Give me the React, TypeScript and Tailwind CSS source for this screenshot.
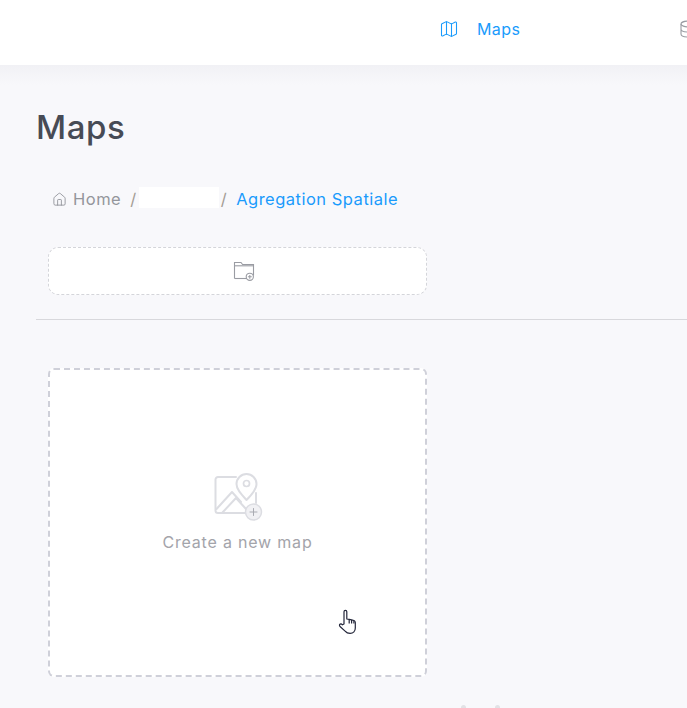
import React from "react";
import { Home, Map } from "lucide-react";

const font = "font-['Inter','Liberation_Sans',sans-serif]";

const FolderPlusIcon = () => (
  <svg width="22" height="22" viewBox="0 0 22 22" fill="none" stroke="#9a9ca3" strokeWidth="1.1">
    <path d="M1.5 18.5V2.5H8l1.6 2h10.9v11" />
    <path d="M1.5 5.8h19" />
    <path d="M1.5 18.5h12.5" />
    <circle cx="16.8" cy="16.8" r="3.6" />
    <path d="M16.8 14.9v3.8M14.9 16.8h3.8" />
  </svg>
);

const NewMapIcon = () => (
  <svg width="50" height="50" viewBox="0 0 50 50" fill="none" stroke="#dcdde2" strokeWidth="2" strokeLinejoin="round" strokeLinecap="round">
    <path d="M23 5H5a2.500 2.500 0 0 0-2.500 2.500v31A2.500 2.500 0 0 0 5 41h27" />
    <path d="M43 21v10" />
    <path d="M3.500 37 19 20l9 10" />
    <path d="M9 41l14-15 10 11" />
    <path d="M33.500 28c-6-6.500-10-11-10-16a10 10 0 0 1 20 0c0 5-4 10-10 16Z" fill="#fff" />
    <circle cx="33.500" cy="11.500" r="3" strokeWidth="1.700" />
    <circle cx="40.500" cy="40" r="8" fill="#f1f1f4" strokeWidth="1.500" />
    <path d="M40.500 36.500v7M37 40h7" stroke="#a9abb2" strokeWidth="1" />
  </svg>
);

const HandCursor = () => (
  <svg width="20" height="26" viewBox="0 0 20 26" fill="#fff" stroke="#23263a" strokeWidth="1.200" strokeLinejoin="round">
    <path d="M6 15V2.800a1.400 1.400 0 0 1 2.800 0V10l2.400.4 2.400.5 2.300.6c1 .3 1.400 1 1.400 2v5.500c0 3-2 5.400-5.200 5.400-2.400 0-3.800-.8-5-2.300L2 17.500c-.8-1-.6-2 .2-2.400.8-.4 1.500-.1 2.200.7Z" />
    <path d="M11.200 10.400v4.200M13.600 10.900v3.700M15.900 11.500v3.100" />
  </svg>
);

export default function App() {
  return (
    <div className={`relative h-[708px] overflow-hidden bg-[#f8f8fb] ${font}`}>
      <header className="flex h-[65px] items-center overflow-hidden bg-white pb-[7px] pl-[439px]">
        <Map size={20} strokeWidth={1.300} className="shrink-0 text-[#1a9bfc]" />
        <span className="ml-[18px] w-[202px] shrink-0 text-[16px] tracking-[0.4px] text-[#1a9bfc]">Maps</span>
        <svg width="20" height="20" viewBox="0 0 20 20" fill="none" stroke="#9a9ca3" strokeWidth="1.100" className="shrink-0">
          <ellipse cx="10" cy="5" rx="8" ry="3" />
          <path d="M2 5v10c0 1.700 3.600 3 8 3s8-1.300 8-3V5M2 10c0 1.700 3.600 3 8 3s8-1.300 8-3" />
        </svg>
      </header>
      <div className="h-5 bg-gradient-to-b from-[#f1f1f5] to-[#f8f8fb]" />

      <main className="-mt-5 pl-9">
        <h1 className="mt-[44px] h-9 text-[33px] leading-9 font-medium tracking-[0.6px] text-[#474b55]">Maps</h1>

        <nav className="mt-[33px] flex h-[42px] items-center pl-[16px] text-[16.5px] tracking-[0.5px]">
          <Home size={15} strokeWidth={1.400} className="text-[#8f9198]" />
          <span className="ml-[6px] text-[#94969c]">Home</span>
          <span className="ml-[9px] text-[#a39c94]">/</span>
          <span className="mx-[2px] mb-1 h-[21px] w-[80px] bg-white" />
          <span className="text-[#a39c94]">/</span>
          <span className="ml-[9px] text-[#1a9bfc]">Agregation Spatiale</span>
        </nav>

        <button className="mt-[27px] ml-3 flex h-12 w-[379px] items-center justify-center rounded-[10px] border border-dashed border-[#d4d5da] bg-white pl-3">
          <FolderPlusIcon />
        </button>

        <hr className="mt-6 border-t border-[#d8d8dc]" />

        <button className="mt-12 ml-3 flex h-[309px] w-[379px] flex-col items-center justify-center rounded-[6px] border-2 border-dashed border-[#cfd0d9] bg-white pb-[20px]">
          <NewMapIcon />
          <span className="mt-2 text-[16px] tracking-[0.8px] text-[#a3a4aa]">Create a new map</span>
        </button>
      </main>

      <div className="absolute top-[609px] left-[338px]">
        <HandCursor />
      </div>
      <div className="absolute top-[705px] left-[461px] h-[3px] w-[5px] rounded-t-sm bg-[#e2e2e6]" />
      <div className="absolute top-[705px] left-[495px] h-[3px] w-[5px] rounded-t-sm bg-[#e2e2e6]" />
    </div>
  );
}
